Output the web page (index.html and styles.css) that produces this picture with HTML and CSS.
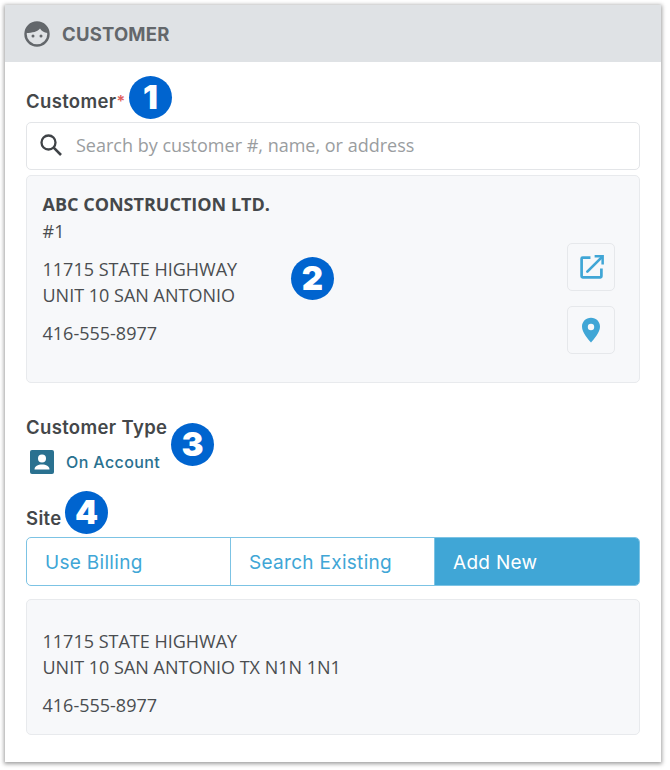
FILE: index.html
```html
<!DOCTYPE html>
<html lang="en">
<head>
<meta charset="utf-8">
<title>Customer</title>
<link rel="stylesheet" href="styles.css">
</head>
<body>
<section class="panel">
  <header class="panel-head">
    <svg class="face" viewBox="0 0 26 26" aria-hidden="true">
      <circle cx="13" cy="13" r="11.500" fill="none" stroke="#63676b" stroke-width="2.400"/>
      <path d="M2.500 12C3 5.500 7.500 1.500 13 1.500S23 5.500 23.500 12C20 11.500 17.500 10 16 7.500 14 10.500 8 12 2.500 12Z" fill="#63676b"/>
      <circle cx="9" cy="15" r="1.500" fill="#63676b"/>
      <circle cx="17" cy="15" r="1.500" fill="#63676b"/>
    </svg>
    <h2 class="panel-title">CUSTOMER</h2>
  </header>
  <div class="panel-body">
    <div class="label-row label-customer">
      <span class="label">Customer<span class="req">*</span></span>
      <span class="badge badge-1">1</span>
    </div>
    <div class="search">
      <svg class="search-icon" viewBox="0 0 24 24" aria-hidden="true">
        <circle cx="9.500" cy="9.500" r="7" fill="none" stroke="#3f4347" stroke-width="2.300"/>
        <path d="M14.700 14.700 22 22" fill="none" stroke="#3f4347" stroke-width="2.600"/>
      </svg>
      <span class="placeholder">Search by customer #, name, or address</span>
    </div>
    <div class="card card-main">
      <div class="card-text">
        <div class="name">ABC CONSTRUCTION LTD.</div>
        <div class="line num">#1</div>
        <div class="line addr">11715 STATE HIGHWAY</div>
        <div class="line">UNIT 10 SAN ANTONIO</div>
        <div class="line phone">416-555-8977</div>
      </div>
      <span class="badge badge-2">2</span>
      <div class="actions">
        <button class="icon-btn" type="button" aria-label="Open">
          <svg viewBox="0 0 24 24" width="25" height="25" aria-hidden="true">
            <path d="M11 2.500H3.500a1 1 0 0 0-1 1v17a1 1 0 0 0 1 1h17a1 1 0 0 0 1-1V13" fill="none" stroke="#40a6d6" stroke-width="2.600"/>
            <path d="M15 1.300h7.700V9" fill="none" stroke="#40a6d6" stroke-width="2.400"/>
            <path d="M21.500 2.500 8 16" fill="none" stroke="#40a6d6" stroke-width="2.600" stroke-linecap="round"/>
          </svg>
        </button>
        <button class="icon-btn" type="button" aria-label="Map">
          <svg viewBox="0 0 20 26" width="20" height="26" aria-hidden="true">
            <path fill-rule="evenodd" d="M10 .8C4.800.8 1 4.700 1 9.700 1 15.500 7.500 22.500 10 25.500c2.500-3 9-10 9-15.800C19 4.700 15.200.8 10 .8Zm0 6a3.200 3.200 0 1 1 0 6.400 3.200 3.200 0 0 1 0-6.400Z" fill="#40a6d6"/>
          </svg>
        </button>
      </div>
    </div>
    <div class="label-row label-type">
      <span class="label">Customer Type</span>
      <span class="badge badge-3">3</span>
    </div>
    <div class="type-value">
      <svg class="type-icon" viewBox="0 0 24 24" aria-hidden="true">
        <rect width="24" height="24" rx="2" fill="#2a7190"/>
        <circle cx="12" cy="8.500" r="4" fill="#fff"/>
        <path d="M4.500 19.500c0-3.200 3.500-5 7.500-5s7.500 1.800 7.500 5Z" fill="#fff"/>
      </svg>
      <span class="type-text">On Account</span>
    </div>
    <div class="label-row label-site">
      <span class="label">Site</span>
      <span class="badge badge-4">4</span>
    </div>
    <div class="segments">
      <div class="seg">Use Billing</div>
      <div class="seg">Search Existing</div>
      <div class="seg seg-active">Add New</div>
    </div>
    <div class="card card-site">
      <div class="line">11715 STATE HIGHWAY</div>
      <div class="line">UNIT 10 SAN ANTONIO TX N1N 1N1</div>
      <div class="line phone">416-555-8977</div>
    </div>
  </div>
</section>
</body>
</html>
```

FILE: styles.css
```css
* { box-sizing: border-box; }
html, body { margin: 0; background: #fff; }
body { width: 670px; height: 770px; overflow: hidden; padding: 5px 9px 0 5px; font-family: "Open Sans", sans-serif; color: #4a4d50; }
.panel {
  width: 656px;
  height: 757px;
  background: #fff;
  box-shadow: 0 1px 4px 1px rgba(0,0,0,.38);
}
.panel-head {
  height: 57px;
  background: #dfe2e5;
  display: flex;
  align-items: center;
  gap: 12px;
  padding: 0 0 0 19px;
}
.face { width: 26px; height: 26px; }
.panel-title {
  margin: 0;
  font-family: Inter, sans-serif;
  font-size: 18.500px;
  font-weight: 700;
  letter-spacing: .2px;
  color: #63676b;
}
.panel-body { padding: 0 21px; }
.label-row { display: flex; align-items: center; position: relative; }
.label {
  font-family: Inter, sans-serif;
  font-size: 18.500px;
  font-weight: 600;
  letter-spacing: .35px;
  color: #44474a;
  line-height: 22px;
}
.req { color: #e0605c; font-size: 16px; vertical-align: 1px; }
.badge {
  position: absolute;
  width: 43px;
  height: 43px;
  border-radius: 50%;
  background: #0064cf;
  color: #fff;
  font-family: Inter, sans-serif;
  font-weight: 900;
  font-size: 33px;
  line-height: 43px;
  text-align: center;
}
.label-customer { margin-top: 28px; height: 22px; }
.badge-1 { left: 103px; top: -14px; }
.search {
  margin-top: 10px;
  height: 48px;
  background: #fff;
  border: 1px solid #e3e5e8;
  border-radius: 5px;
  display: flex;
  align-items: center;
  gap: 13px;
  padding: 0 0 2px 12px;
}
.search-icon { width: 24px; height: 24px; }
.placeholder { font-size: 18px; color: #9a9da0; }
.card {
  background: #f7f8fa;
  border: 1px solid #e8eaed;
  border-radius: 5px;
  font-size: 18px;
  line-height: 26px;
  color: #4a4d50;
}
.card-main {
  position: relative;
  margin-top: 5px;
  height: 208px;
  padding: 15px 24px 0 15.500px;
  display: flex;
  justify-content: space-between;
}
.name { font-weight: 700; font-size: 18px; color: #45484b; margin-bottom: 1px; }
.num { margin-bottom: 12px; }
.phone { margin-top: 12px; }
.badge-2 { left: 264px; top: 81px; }
.actions { display: flex; flex-direction: column; gap: 15px; margin-top: 52px; }
.icon-btn {
  width: 48px;
  height: 48px;
  padding: 0;
  background: #f7f8fa;
  border: 1px solid #e6e8eb;
  border-radius: 5px;
  display: flex;
  align-items: center;
  justify-content: center;
}
.label-type { margin-top: 33px; height: 22px; }
.badge-3 { left: 145px; top: 7px; }
.type-value { display: flex; align-items: center; gap: 12px; margin-top: 12px; padding-left: 4px; }
.type-icon { width: 24px; height: 24px; }
.type-text { font-family: Inter, sans-serif; font-weight: 500; font-size: 16px; letter-spacing: .4px; color: #2a7190; }
.label-site { margin-top: 33px; height: 22px; }
.badge-4 { left: 39px; top: -16px; }
.segments {
  margin-top: 8px;
  height: 49px;
  display: grid;
  grid-template-columns: 204px 204px 1fr;
  border: 1px solid #7cc3e4;
  border-radius: 5px;
  overflow: hidden;
}
.seg {
  display: flex;
  align-items: center;
  padding: 1px 0 0 18px;
  font-family: Inter, sans-serif;
  font-size: 19px;
  font-weight: 400;
  letter-spacing: .3px;
  color: #40a6d6;
  border-right: 1px solid #7cc3e4;
}
.seg-active { background: #40a6d6; color: #fff; border-right: 0; }
.card-site { margin-top: 13px; height: 136px; padding: 28px 15.500px 0; }
```
